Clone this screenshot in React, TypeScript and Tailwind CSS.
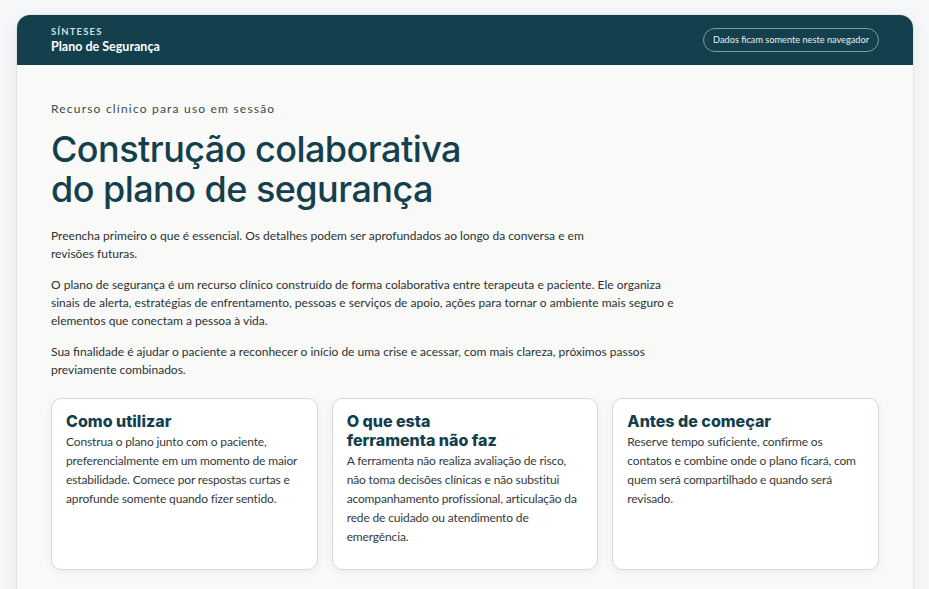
const cards = [
  {
    title: ['Como utilizar'],
    text: 'Construa o plano junto com o paciente, preferencialmente em um momento de maior estabilidade. Comece por respostas curtas e aprofunde somente quando fizer sentido.',
  },
  {
    title: ['O que esta', 'ferramenta não faz'],
    text: 'A ferramenta não realiza avaliação de risco, não toma decisões clínicas e não substitui acompanhamento profissional, articulação da rede de cuidado ou atendimento de emergência.',
  },
  {
    title: ['Antes de começar'],
    text: 'Reserve tempo suficiente, confirme os contatos e combine onde o plano ficará, com quem será compartilhado e quando será revisado.',
  },
];

const body = { fontFamily: 'Lato, "Noto Sans", sans-serif' };
const display = { fontFamily: 'Inter, "Noto Sans", sans-serif' };

export default function App() {
  return (
    <div className="min-h-screen bg-[#f6f7f8] pt-[14px] pr-[15px] pl-4">
      <div className="overflow-hidden rounded-t-[14px] border border-[#e1e4e3] bg-[#f9f9f7] shadow-[0_4px_18px_rgba(20,40,50,0.06)]">
        <header className="flex h-[50px] items-center justify-between bg-[#143f4d] px-[34px]" style={body}>
          <div className="leading-none">
            <div className="text-[9.5px] font-bold tracking-[0.12em] text-[#cfe0e2]">SÍNTESES</div>
            <div className="mt-[4px] text-[12.5px] font-bold text-white">Plano de Segurança</div>
          </div>
          <div className="rounded-full border border-[#7f9ca3] px-[9px] py-[5px] text-[9.2px] leading-[12px] text-[#e8f0f1]">
            Dados ficam somente neste navegador
          </div>
        </header>

        <main className="px-[34px] pt-[35px] pb-10" style={body}>
          <p className="text-[12px] tracking-[0.1em] text-[#3b4a50]">Recurso clínico para uso em sessão</p>
          <h1
            className="mt-[11px] text-[36px] font-medium leading-[40px] tracking-[-0.015em] text-[#143f4d]"
            style={display}
          >
            Construção colaborativa
            <br />
            do plano de segurança
          </h1>

          <div className="mt-[18px] space-y-[13px] text-[12px] leading-[18px] text-[#2b3235]">
            <p className="max-w-[540px]">
              Preencha primeiro o que é essencial. Os detalhes podem ser aprofundados ao longo da conversa e em revisões futuras.
            </p>
            <p className="max-w-[628px]">
              O plano de segurança é um recurso clínico construído de forma colaborativa entre terapeuta e paciente. Ele organiza sinais de alerta, estratégias de enfrentamento, pessoas e serviços de apoio, ações para tornar o ambiente mais seguro e elementos que conectam a pessoa à vida.
            </p>
            <p className="max-w-[628px]">
              Sua finalidade é ajudar o paciente a reconhecer o início de uma crise e acessar, com mais clareza, próximos passos previamente combinados.
            </p>
          </div>

          <div className="mt-[19px] grid grid-cols-3 gap-[14px]">
            {cards.map((card) => (
              <div
                key={card.title[0]}
                className="h-[172px] rounded-[10px] border border-[#d3dbdb] bg-white px-[14px] pt-[13px] shadow-[0_3px_10px_rgba(20,40,50,0.05)]"
              >
                <h2 className="text-[16px] font-extrabold leading-[19px] text-[#143f4d]" style={display}>
                  {card.title.map((line, i) => (
                    <span key={i} className="block">
                      {line}
                    </span>
                  ))}
                </h2>
                <p className="mt-[1px] text-[12px] leading-[19px] tracking-[-0.012em] text-[#333a3d]">{card.text}</p>
              </div>
            ))}
          </div>
        </main>
      </div>
    </div>
  );
}
